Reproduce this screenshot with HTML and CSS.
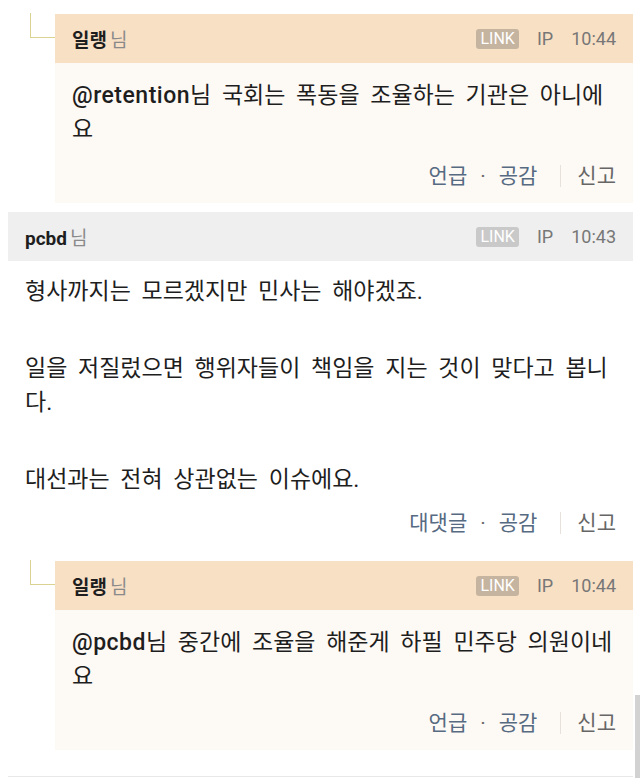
FILE: index.html
```html
<!DOCTYPE html>
<html lang="ko">
<head>
<meta charset="utf-8">
<link rel="stylesheet" href="styles.css">
</head>
<body>
<div class="thread">
  <div class="reply">
    <div class="connector"></div>
    <div class="card">
      <div class="head head-reply">
        <div class="author"><b>일랭</b><span class="nim">님</span></div>
        <div class="meta"><span class="badge badge-reply">LINK</span><span>IP</span><span>10:44</span></div>
      </div>
      <div class="body body-reply">
        <p class="text"><span class="mention">@retention</span>님 국회는 폭동을 조율하는 기관은 아니에요</p>
        <div class="actions"><span class="act">언급</span><span class="dot">·</span><span class="act">공감</span><span class="sep"></span><span class="report">신고</span></div>
      </div>
    </div>
  </div>

  <div class="comment">
    <div class="head head-comment">
      <div class="author"><b>pcbd</b><span class="nim">님</span></div>
      <div class="meta"><span class="badge badge-comment">LINK</span><span>IP</span><span>10:43</span></div>
    </div>
    <div class="body body-comment">
      <p class="text">형사까지는 모르겠지만 민사는 해야겠죠.</p>
      <p class="text">일을 저질렀으면 행위자들이 책임을 지는 것이 맞다고 봅니다.</p>
      <p class="text">대선과는 전혀 상관없는 이슈에요.</p>
      <div class="actions"><span class="act">대댓글</span><span class="dot">·</span><span class="act">공감</span><span class="sep"></span><span class="report">신고</span></div>
    </div>
  </div>

  <div class="reply">
    <div class="connector"></div>
    <div class="card">
      <div class="head head-reply">
        <div class="author"><b>일랭</b><span class="nim">님</span></div>
        <div class="meta"><span class="badge badge-reply">LINK</span><span>IP</span><span>10:44</span></div>
      </div>
      <div class="body body-reply">
        <p class="text"><span class="mention">@pcbd</span>님 중간에 조율을 해준게 하필 민주당 의원이네요</p>
        <div class="actions"><span class="act">언급</span><span class="dot">·</span><span class="act">공감</span><span class="sep"></span><span class="report">신고</span></div>
      </div>
    </div>
  </div>

  <div class="next"></div>
</div>
<div class="scrollbar"></div>
</body>
</html>
```

FILE: styles.css
```css
html, body {
  margin: 0;
  padding: 0;
  background: #ffffff;
}
body {
  width: 640px;
  height: 778px;
  overflow: hidden;
  position: relative;
  font-family: Roboto, "Noto Sans CJK KR", sans-serif;
  color: #222222;
}
.thread {
  padding: 14px 7px 0 8px;
  display: flex;
  flex-direction: column;
}
.reply {
  display: flex;
  padding-left: 22px;
}
.connector {
  width: 24px;
  height: 24px;
  border-left: 1.5px solid #d9d290;
  border-bottom: 1.5px solid #d9d290;
  margin-top: -1px;
  flex: none;
}
.card {
  flex: 1;
  display: flex;
  flex-direction: column;
}
.head {
  height: 49px;
  display: flex;
  align-items: center;
  justify-content: space-between;
  padding: 0 17px;
}
.head-reply { background: #f8e0c5; }
.head-comment { background: #efefef; }
.author {
  font-size: 19px;
  display: flex;
  align-items: baseline;
}
.author b {
  font-weight: 700;
  color: #1e1e1e;
}
.nim {
  color: #8a8a8a;
  margin-left: 3px;
}
.meta {
  display: flex;
  align-items: center;
  gap: 18px;
  font-size: 18px;
  color: #777777;
}
.badge {
  color: #ffffff;
  font-size: 16px;
  line-height: 20px;
  padding: 0 4px;
  border-radius: 3px;
}
.badge-reply { background: #c5b49f; }
.badge-comment { background: #c9c9c9; }
.body {
  padding: 16px 17px 14px 17px;
}
.body-reply { background: #fdf9f4; }
.body-comment {
  background: #ffffff;
  padding-top: 14px;
  padding-bottom: 15px;
}
.text {
  margin: 0;
  font-size: 23px;
  line-height: 34px;
  word-spacing: 5px;
  color: #1e1e1e;
}
.text + .text {
  margin-top: 43px;
}
.mention {
  font-weight: 500;
  letter-spacing: 0.5px;
  word-spacing: 0;
}
.actions {
  margin-top: 16px;
  display: flex;
  justify-content: flex-end;
  align-items: center;
  font-size: 21px;
  line-height: 26px;
}
.body-comment .actions { margin-top: 13px; }
.act { color: #566a82; }
.dot {
  color: #666666;
  margin: 0 13px;
}
.sep {
  width: 1px;
  height: 22px;
  background: #e6e1da;
  margin: 0 16px 0 23px;
}
.report { color: #666666; }
.comment + .reply { margin-top: 10px; }
.reply + .comment { margin-top: 9px; }
.next {
  margin-top: 26px;
  border-top: 1px solid #e8e8e8;
}
.scrollbar {
  position: absolute;
  right: 0;
  top: 695px;
  width: 5px;
  height: 83px;
  background: #d2d2d2;
}
```
